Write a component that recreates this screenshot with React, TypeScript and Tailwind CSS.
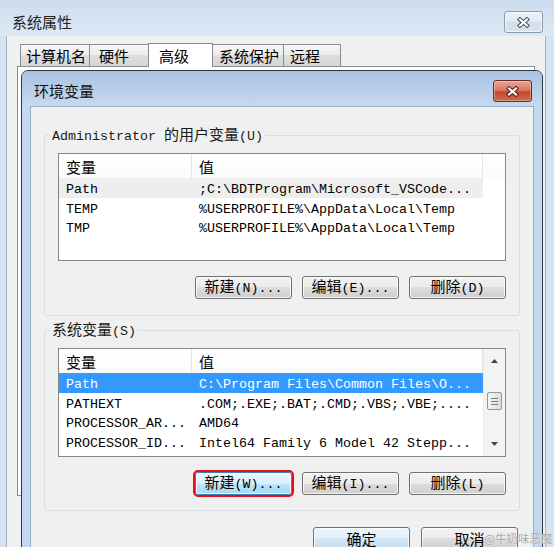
import clsx from "clsx";

const cjk = "font-['Noto_Sans_CJK_SC',sans-serif]";
const mono = "font-['Liberation_Mono','Noto_Sans_CJK_SC',monospace]";

// SimSun-style mixed text: CJK runs wider than the half-width latin runs
function Mixed({ text }: { text: string }) {
  const parts = text.split(/([\u4e00-\u9fff]+)/).filter(Boolean);
  return (
    <span className="flex items-baseline">
      {parts.map((p, i) =>
        /[\u4e00-\u9fff]/.test(p) ? (
          <span key={i} className={clsx(cjk, "text-[15px] leading-[18px]")}>
            {p}
          </span>
        ) : (
          <span key={i} className={clsx(mono, "whitespace-pre text-[13.33px] leading-[18px]")}>
            {p}
          </span>
        )
      )}
    </span>
  );
}

function CloseGlyph({ edge }: { edge: string }) {
  const d = "M3 2.5 L10 8.5 M10 2.5 L3 8.5";
  return (
    <svg width="13" height="11" viewBox="0 0 13 11">
      <path d={d} stroke={edge} strokeWidth="4.2" strokeLinecap="square" fill="none" />
      <path d={d} stroke="#ffffff" strokeWidth="2.2" strokeLinecap="square" fill="none" />
    </svg>
  );
}

function Button({ label, kind }: { label: string; kind?: "hot" | "default" }) {
  return (
    <button
      className={clsx(
        "flex h-[23px] w-[97px] shrink-0 items-center justify-center rounded-[3px] border leading-none text-black shadow-[inset_0_0_0_1px_rgba(255,255,255,0.75)]",
        kind === "hot" &&
          "border-[#3c7fb1] bg-[linear-gradient(#eaf6fd,#d9f0fc_50%,#bee6fd_50%,#a7d9f5)] outline-2 outline-[#e3101a]",
        kind === "default" &&
          "border-[#3c7fb1] bg-[linear-gradient(#eef5fb,#e2eff9_50%,#d2e6f5_50%,#c6def1)]",
        !kind && "border-[#707070] bg-[linear-gradient(#f2f2f2,#ebebeb_50%,#dddddd_50%,#cfcfcf)]"
      )}
    >
      <Mixed text={label} />
    </button>
  );
}

type RowData = { name: string; value: string; sel?: "focus" | "dim" };

function Row({ name, value, sel }: RowData) {
  return (
    <div
      className={clsx(
        mono,
        "flex h-[19.5px] items-center whitespace-pre pt-[4px] text-[13.33px] leading-none",
        sel === "focus" && "bg-[#3399ff] text-white",
        sel === "dim" && "bg-[#eeeeee] text-black",
        !sel && "text-black"
      )}
    >
      <div className="w-[133px] shrink-0 overflow-hidden pl-[7px]">{name}</div>
      <div className="overflow-hidden pl-[7px]">{value}</div>
    </div>
  );
}

function Header() {
  return (
    <div className={clsx(cjk, "flex h-[24px] items-center bg-[linear-gradient(#ffffff,#fbfbfb)] text-[15px] leading-none text-black")}>
      <div className="flex h-full w-[133px] shrink-0 items-center border-r border-[#e2e5ea] pl-[7px]">变量</div>
      <div className="flex h-full flex-1 items-center border-r border-[#e2e5ea] pl-[7px]">值</div>
    </div>
  );
}

function Arrow({ up }: { up?: boolean }) {
  return (
    <svg width="7" height="4" viewBox="0 0 7 4">
      <path d={up ? "M0 4 L3.5 0 L7 4Z" : "M0 0 L3.5 4 L7 0Z"} fill="#444" />
    </svg>
  );
}

function Legend({ text }: { text: string }) {
  return (
    <legend className="-ml-[8px] flex h-[20px] items-center px-[2px] text-[#1a1a1a]">
      <Mixed text={text} />
    </legend>
  );
}

const userRows: RowData[] = [
  { name: "Path", value: ";C:\\BDTProgram\\Microsoft_VSCode...", sel: "dim" },
  { name: "TEMP", value: "%USERPROFILE%\\AppData\\Local\\Temp" },
  { name: "TMP", value: "%USERPROFILE%\\AppData\\Local\\Temp" },
];

const sysRows: RowData[] = [
  { name: "Path", value: "C:\\Program Files\\Common Files\\O...", sel: "focus" },
  { name: "PATHEXT", value: ".COM;.EXE;.BAT;.CMD;.VBS;.VBE;...." },
  { name: "PROCESSOR_AR...", value: "AMD64" },
  { name: "PROCESSOR_ID...", value: "Intel64 Family 6 Model 42 Stepp..." },
];

const tabs = [
  { label: "计算机名", w: "w-[70px]", pl: "pl-[5px]" },
  { label: "硬件", w: "w-[60px]", pl: "pl-[9px]" },
  { label: "高级", w: "w-[65px]", pl: "pl-[10px]", active: true },
  { label: "系统保护", w: "w-[72px]", pl: "pl-[6px]" },
  { label: "远程", w: "w-[58px]", pl: "pl-[6px]" },
];

export default function App() {
  return (
    <div className="relative h-[547px] w-[554px] overflow-hidden bg-[#d6e3f1]">
      {/* 系统属性 (behind) */}
      <div className="flex h-full flex-col">
        <div className="flex h-[36px] shrink-0 items-start justify-between bg-[linear-gradient(#cddcee,#dde8f4)] pl-[12px] pr-[11px]">
          <span className={clsx(cjk, "mt-[12px] text-[15px] leading-[20px] text-[#222]")}>系统属性</span>
          <div className="mt-[11px] flex h-[22px] w-[39px] items-center justify-center rounded-[3px] border border-[#8b9bb1] bg-[linear-gradient(#eef3f9,#e0e8f1_50%,#d2dde9_50%,#d9e3ee)] shadow-[inset_0_0_0_1px_rgba(255,255,255,0.6)]">
            <CloseGlyph edge="#4a4f57" />
          </div>
        </div>
        <div className="ml-[6px] mr-[8px] flex-1 border-x border-[#a3b3c7] bg-[#f0f0f0] px-[10px] pt-[7px]">
          <div className="relative z-10 ml-[3px] flex h-[23px] items-start">
            {tabs.map((t, i) => (
              <div
                key={t.label}
                className={clsx(
                  cjk,
                  t.w,
                  t.pl,
                  i > 0 && "-ml-px",
                  "flex items-center border border-b-0 border-[#898c95] text-[15px] leading-none text-black",
                  t.active
                    ? "relative z-10 h-[24px] bg-white"
                    : "mt-[1px] h-[22px] bg-[linear-gradient(#f7f7f7,#ebebeb_50%,#dedede_50%,#d6d6d6)]"
                )}
              >
                {t.label}
              </div>
            ))}
          </div>
          <div className="h-[430px] border border-[#898c95] bg-white" />
        </div>
      </div>

      {/* 环境变量 dialog */}
      <div className="absolute left-[21px] top-[70px] z-20 flex h-[490px] w-[522px] flex-col overflow-hidden rounded-t-[7px] border border-[#2f3945] bg-[#c3d7ee]">
        <div className="flex h-[35px] shrink-0 items-start justify-between bg-[linear-gradient(#a8c2e1,#c6d9ef)] pl-[12px] pr-[10px]">
          <span className={clsx(cjk, "mt-[10px] text-[15px] leading-[20px] text-[#111]")}>环境变量</span>
          <div className="mt-[9px] flex h-[22px] w-[39px] items-center justify-center rounded-[3px] border border-[#6b2a22] bg-[linear-gradient(#e7a795,#d77c64_45%,#c3462e_55%,#cf6a4b)] shadow-[inset_0_0_0_1px_rgba(255,215,200,0.45)]">
            <CloseGlyph edge="#5e1a10" />
          </div>
        </div>
        <div className="mx-[8px] flex flex-1 flex-col border border-[#97adc8] bg-[#f0f0f0] px-[13px]">
          {/* user variables */}
          <fieldset className="mt-[18px] rounded-[3px] border border-[#d5dfe5] px-[13px] pb-[16px] pt-[8px]">
            <Legend text="Administrator 的用户变量(U)" />
            <div className="h-[108px] border border-[#828790] bg-white">
              <div className="flex">
                <div className="w-[424px]">
                  <Header />
                  {userRows.map((r) => (
                    <Row key={r.name} {...r} />
                  ))}
                </div>
                <div className="h-[24px] flex-1 bg-[linear-gradient(#ffffff,#fbfbfb)]" />
              </div>
            </div>
            <div className="mt-[15px] flex justify-end gap-[10px]">
              <Button label="新建(N)..." />
              <Button label="编辑(E)..." />
              <Button label="删除(D)" />
            </div>
          </fieldset>

          {/* system variables */}
          <fieldset className="mt-[4px] rounded-[3px] border border-[#d5dfe5] px-[13px] pb-[15px] pt-[8px]">
            <Legend text="系统变量(S)" />
            <div className="flex h-[109px] border border-[#828790] bg-white">
              <div className="w-[424px] overflow-hidden">
                <Header />
                {sysRows.map((r) => (
                  <Row key={r.name} {...r} />
                ))}
              </div>
              <div className="flex flex-1 flex-col border-l border-[#e9e9e9] bg-[#f3f3f3]">
                <div className="flex h-[24px] items-center justify-center">
                  <Arrow up />
                </div>
                <div className="flex-1 px-[3px] pt-[19px]">
                  <div className="flex h-[18px] flex-col items-center justify-center gap-[2px] rounded-[2px] border border-[#979797] bg-[linear-gradient(90deg,#f4f4f4,#e9e9e9_50%,#dcdcdc)]">
                    <div className="h-px w-[7px] bg-[#7a7a7a]" />
                    <div className="h-px w-[7px] bg-[#7a7a7a]" />
                    <div className="h-px w-[7px] bg-[#7a7a7a]" />
                  </div>
                </div>
                <div className="flex h-[24px] items-center justify-center">
                  <Arrow />
                </div>
              </div>
            </div>
            <div className="mt-[15px] flex justify-end gap-[10px]">
              <Button label="新建(W)..." kind="hot" />
              <Button label="编辑(I)..." />
              <Button label="删除(L)" />
            </div>
          </fieldset>

          <div className="mt-[16px] flex justify-end gap-[11px] pr-[2px]">
            <Button label="确定" kind="default" />
            <Button label="取消" />
          </div>
        </div>
      </div>

      <span
        className={clsx(
          cjk,
          "absolute left-[484px] top-[530px] z-30 text-[11.5px] leading-[16px] text-[#a9a9a9] [text-shadow:0_0_1px_#fff]"
        )}
      >
        @牛奶味恶魔
      </span>
    </div>
  );
}
